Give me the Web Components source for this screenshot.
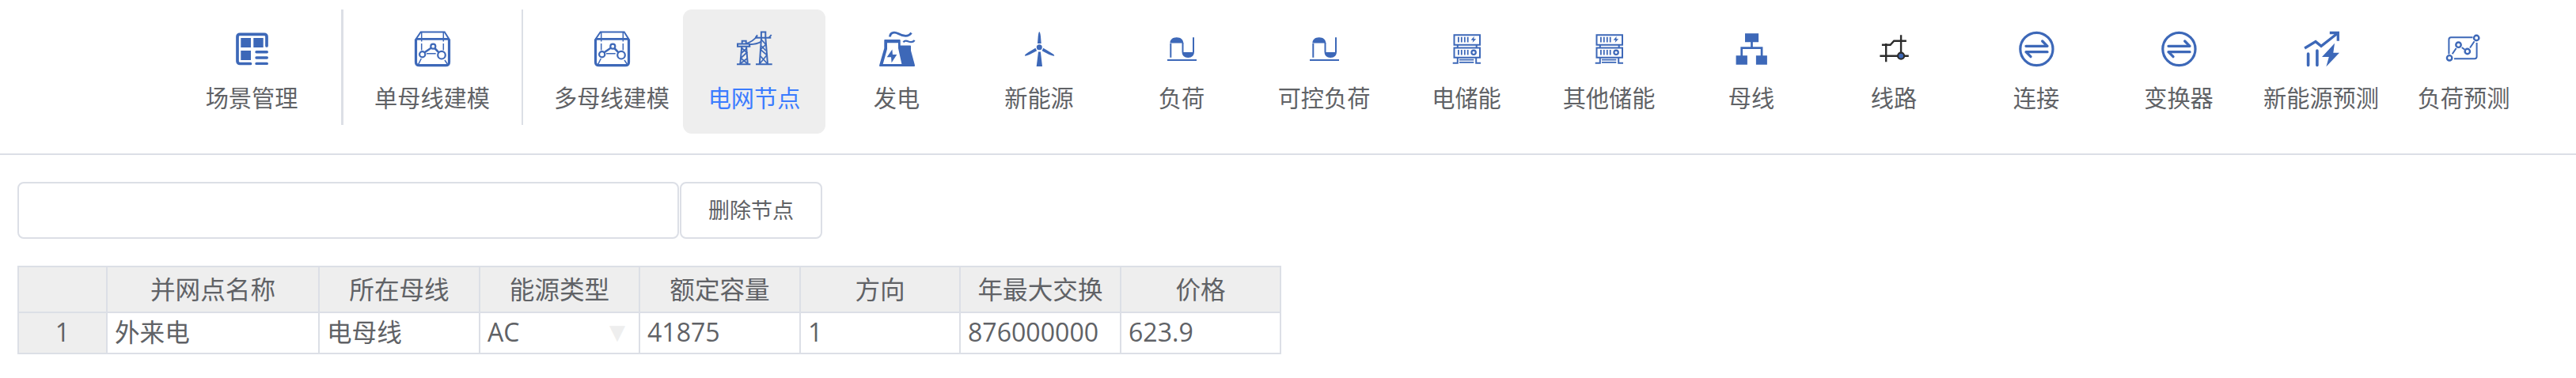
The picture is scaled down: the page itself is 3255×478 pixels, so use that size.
<!DOCTYPE html>
<html lang="zh-CN">
<head>
<meta charset="utf-8">
<title>电网节点</title>
<style>
body {
  margin: 0;
  background: #ffffff;
  color: #606266;
  font-family: "Open Sans", "Noto Sans CJK SC", sans-serif;
}
</style>
</head>
<body>
<grid-editor></grid-editor>

<script>
const box = `
  <path d="M3.5 11.5V40.5Q3.5 44.7 7.7 44.7H41.3Q45.5 44.7 45.5 40.5V11.5" stroke-width="3.2"/>
  <path d="M3 11.3H46" stroke-width="2.7"/>
  <path d="M3.2 12L9.7 2.5H39.7L45.8 12" stroke-width="2"/>
  <path d="M10.7 3V14.5M10.7 17V25.5M38.3 3V14.5M38.3 17V25.5M17 29.7H28.7M10.3 36L6.7 43.3M40 38L43.3 43" stroke-width="1.5"/>
  <path d="M14.5 28.3L23 22.5M27.3 23L32.5 28.3" stroke-width="2.6"/>
  <circle cx="11.7" cy="30.7" r="3.6" stroke-width="2.2"/>
  <circle cx="25.3" cy="20.7" r="3" stroke-width="2.2"/>
  <circle cx="36" cy="31.7" r="4.8" stroke-width="2.2"/>`;

const wave = `
  <path d="M10.3 34.7V17M25.5 16V28M39 9.3V28" stroke-width="2"/>
  <path class="fill" d="M9.4 16.4C9.4 12 12.8 9.2 17.8 9.2S26.3 12 26.3 16.4ZM24.6 28H39.9C39.9 32 37 35 32.3 35S24.6 32 24.6 28Z"/>
  <path d="M6 38H43" stroke-width="2"/>`;

const storage = `
  <path d="M8.5 6.2H41V18.7H8.5ZM8.5 22.5H41V34.7H8.5Z" stroke-width="2"/>
  <path d="M12.8 18.7V22.5M36.7 18.7V22.5M12.8 34.7V41.7H6.7M36.2 34.7V41.7H42" stroke-width="2"/>
  <path d="M15 37.6H33.3M15 40.9H33.3M13.9 8.7V15.4M17.8 8.7V15.4M21.8 8.7V15.4M25.7 8.7V15.4M13.9 25V31.5M17.8 25V31.5M21.8 25V31.5M25.7 25V31.5" stroke-width="1.8"/>
  <path class="fill" d="M33.6 8L29.6 12.8H32.4L31.6 16L36.2 11.2H33.4Z"/>
  <circle cx="33.1" cy="28.3" r="2.7" stroke-width="2.2"/>`;

const swap = `
  <circle cx="24.4" cy="24" r="20.6" stroke-width="3.2"/>
  <path d="M11 20.3H38L31.7 14M38 27.7H11L17 33.7" stroke-width="3.3" stroke-linecap="round" stroke-linejoin="round"/>`;

// every icon is drawn on a 48 x 48 grid
const icons = {
  scene: `
  <path d="M43 20V8.3a3 3 0 0 0-3-3H9a3 3 0 0 0-3 3V39.5a3 3 0 0 0 3 3H22.5" stroke-width="3.7" stroke-linecap="round"/>
  <path class="fill" d="M10.3 10H23V22H10.3ZM26.3 10H38.7V22H26.3ZM10.3 26H23V38H10.3Z"/>
  <path d="M30 27.7H43.3M30 35H43.3M30 42.4H43.3" stroke-width="3.4" stroke-linecap="round"/>`,
  box,
  pylon: `
  <path d="M32.9 9V2.5H38.3V9M33 9.7L30.8 43M38.3 9.7L41 43M8.7 17V13.8H13.7V17M8.3 20.7L6.3 43M14 20.7L15.8 43" stroke-width="2"/>
  <path d="M26 9.7H45.3M26 43.3H46.7M2 43.3H19.3M2 17.5H18.5M2 20.7H19.3M3 17V21.5M18 17V21.5" stroke-width="2"/>
  <path d="M25.5 9.7L28 6.3M42.7 9.7L45.7 6M13.7 17.2Q22.5 14.5 28 7.5M18.3 18.3Q27 18 33 14.7" stroke-width="1.9"/>
  <path d="M33 12L38.7 18.3L32 24.7L40 31.7L31 42.5M33 20L38.7 26M32 33L40.5 42.5M8 22.5L14.7 28.5L7 35.5L15.5 42.5M14.7 23L8 29M15 36L6.5 42.5" stroke-width="1.7"/>`,
  plant: `
  <path class="fill" fill-rule="evenodd" d="M9 12H27.7Q28.7 12 28.7 13V19.4H41.2Q42 19.4 42 20.4V26L47 44.5Q47.3 46 46 46H3Q1.7 46 2.1 44.5L8.3 23V13Q8.3 12 9 12ZM12 16.3V24L6.7 43H30.4L26 23V16.3Z"/>
  <path class="fill" d="M18.4 24.5L11.7 34.3H17L17.6 41.2L24.3 31H18.9Z"/>
  <path d="M15.5 8.5C16 2 22 2.5 26 4.5C32 7.8 39 9 42.5 3.5" stroke-width="2.9"/>
  <path d="M32.5 15.3C34 13 37 13.6 39 14.5C42 15.6 45 15 46.7 13" stroke-width="2.3"/>`,
  wind: `
  <circle class="fill" cx="24.3" cy="21.8" r="3.5"/>
  <path class="fill" d="M22 17L22.7 8Q23.3 2.3 24.3 2.3T26 8L26.7 17ZM19.4 22.8L21.2 26.3L12 31Q6 33.4 6 32.3Q5.7 31 10.5 28ZM29.3 22.8L27.6 26.3L36.7 31Q43 33.4 43.3 32.3Q43.3 31 38 28ZM23 27.5H25.9L28 46H20.7Z"/>`,
  wave,
  storage,
  bus: `
  <path class="fill" d="M16 4.3H33.1V15.3H16ZM4.6 32.3H18.9V43.7H4.6ZM29.9 32.3H43.9V43.7H29.9Z"/>
  <path d="M24.5 15V22.7M11.7 33V22.7H37.1V33" stroke-width="2.7"/>`,
  line: `
  <path class="dark" d="M33.1 6.3V32.7M6.4 32.8H42.8M14.2 17V40.3M8.9 18.7H19.6L24.2 13.7H39.9" stroke-width="2.4"/>
  <circle class="dot" cx="33.1" cy="32.7" r="4" stroke-width="2.2"/>`,
  swap,
  trend: `
  <path d="M3.1 23L17 14.6L24 20.3L44.5 4.3M34.8 3.5H45.3V13.7" stroke-width="3.3"/>
  <path d="M7.6 30V44.5M18.9 26V44.5" stroke-width="3.6" stroke-linecap="round"/>
  <path class="fill" d="M41 16.7L25 34H33.8L30.4 46.3L47 28.7H39.3Z"/>`,
  scatter: `
  <path d="M5.4 30.5V12Q5.4 9.3 8.1 9.3H35.5M40.6 16V33.6Q40.6 36.3 37.9 36.3H12" stroke-width="2"/>
  <path d="M9.7 30.3L14.6 23M21.7 22L25.5 24.7M32 22.5L37.6 14.3" stroke-width="2"/>
  <circle cx="6.1" cy="35.3" r="3.2" stroke-width="2.4"/>
  <circle cx="17.5" cy="18.7" r="3.2" stroke-width="2.4"/>
  <circle cx="28.8" cy="27" r="3.2" stroke-width="2.4"/>
  <circle cx="40.2" cy="10" r="3.2" stroke-width="2.4"/>`
};

class NavItem extends HTMLElement {
  constructor() {
    super();
    this.attachShadow({ mode: "open" });
  }

  connectedCallback() {
    this.shadowRoot.innerHTML = `
<style>
:host {
  display: flex;
  flex: none;
  flex-direction: column;
  align-items: center;
  box-sizing: border-box;
  width: 180px;
  height: 157px;
  padding-top: 26px;
  border-radius: 11px;
  font-size: 29.2px;
  line-height: 40px;
  white-space: nowrap;
  cursor: pointer;
}

:host([active]) {
  background: #eeeeee;
  color: #3b7cff;
}

svg {
  display: block;
  width: 48px;
  height: 48px;
  margin-bottom: 18px;
  fill: none;
  stroke: #3d68b8;
}

.fill {
  fill: #3d68b8;
  stroke: none;
}

.dark, .dot {
  stroke: #2c2c2c;
}

.dot {
  fill: #3d68b8;
}
</style>
<svg viewBox="0 0 48 48">${icons[this.getAttribute("icon")]}</svg>
<span><slot></slot></span>`;
  }
}

const navTemplate = document.createElement("template");
navTemplate.innerHTML = `
<style>
:host {
  display: flex;
  box-sizing: border-box;
  height: 196px;
  padding: 12px 0 0 228px;
  border-bottom: 2px solid #dcdfe6;
}

.divider {
  flex: none;
  width: 2px;
  height: 146px;
  margin: 0 22px 0 23px;
  background: #dcdfe6;
}

.first {
  width: 3px;
}
</style>
<nav-item icon="scene">场景管理</nav-item>
<div class="divider first"></div>
<nav-item icon="box">单母线建模</nav-item>
<div class="divider"></div>
<nav-item icon="box">多母线建模</nav-item>
<nav-item icon="pylon" active>电网节点</nav-item>
<nav-item icon="plant">发电</nav-item>
<nav-item icon="wind">新能源</nav-item>
<nav-item icon="wave">负荷</nav-item>
<nav-item icon="wave">可控负荷</nav-item>
<nav-item icon="storage">电储能</nav-item>
<nav-item icon="storage">其他储能</nav-item>
<nav-item icon="bus">母线</nav-item>
<nav-item icon="line">线路</nav-item>
<nav-item icon="swap">连接</nav-item>
<nav-item icon="swap">变换器</nav-item>
<nav-item icon="trend">新能源预测</nav-item>
<nav-item icon="scatter">负荷预测</nav-item>
`;

class NavBar extends HTMLElement {
  constructor() {
    super();
    this.attachShadow({ mode: "open" });
    this.shadowRoot.appendChild(navTemplate.content.cloneNode(true));
  }
}

const actionTemplate = document.createElement("template");
actionTemplate.innerHTML = `
<style>
:host {
  display: flex;
  gap: 1px;
  height: 72px;
}

input, button {
  box-sizing: border-box;
  height: 72px;
  border: 2px solid #dcdfe6;
  border-radius: 8px;
  background: #ffffff;
  color: inherit;
  font-family: inherit;
  font-size: 27px;
}

input {
  width: 836px;
  padding: 0 22px;
}

button {
  width: 180px;
  padding: 0 0 4px;
  cursor: pointer;
}
</style>
<input type="text">
<button><slot></slot></button>
`;

class NodeAction extends HTMLElement {
  constructor() {
    super();
    this.attachShadow({ mode: "open" });
    this.shadowRoot.appendChild(actionTemplate.content.cloneNode(true));
  }
}

const tableTemplate = document.createElement("template");
tableTemplate.innerHTML = `
<style>
:host {
  display: block;
  font-size: 31.6px;
}

table {
  table-layout: fixed;
  width: 1597px;
  border-collapse: separate;
  border-spacing: 0;
  border-top: 2px solid #dcdfe6;
  border-left: 2px solid #dcdfe6;
}

th, td {
  box-sizing: border-box;
  padding: 0 0 2px 9px;
  border-right: 2px solid #dcdfe6;
  border-bottom: 2px solid #dcdfe6;
  font-weight: 400;
  text-align: left;
  white-space: nowrap;
  line-height: 44px;
}

th {
  padding: 0;
  background: #eeeeee;
  text-align: center;
}

thead th {
  height: 58px;
}

tbody th, td {
  height: 52px;
}

tbody th {
  padding-bottom: 2px;
}

tbody th, .number {
  font-size: 32.1px;
}

.select {
  display: flex;
  align-items: center;
  justify-content: space-between;
  height: 44px;
  padding-right: 17px;
}

.arrow {
  color: #eeeeee;
  font-family: "DejaVu Sans", sans-serif;
  font-size: 26px;
}
</style>
<table>
  <colgroup>
    <col style="width: 112px">
    <col style="width: 268px">
    <col style="width: 203px">
    <col style="width: 202px">
    <col style="width: 203px">
    <col style="width: 202px">
    <col style="width: 203px">
    <col style="width: 202px">
  </colgroup>
  <thead>
    <tr>
      <th></th>
      <th>并网点名称</th>
      <th>所在母线</th>
      <th>能源类型</th>
      <th>额定容量</th>
      <th>方向</th>
      <th>年最大交换</th>
      <th>价格</th>
    </tr>
  </thead>
  <tbody>
    <tr>
      <th>1</th>
      <td>外来电</td>
      <td>电母线</td>
      <td><div class="select number">AC<span class="arrow">▼</span></div></td>
      <td class="number">41875</td>
      <td class="number">1</td>
      <td class="number">876000000</td>
      <td class="number">623.9</td>
    </tr>
  </tbody>
</table>
`;

class NodeTable extends HTMLElement {
  constructor() {
    super();
    this.attachShadow({ mode: "open" });
    this.shadowRoot.appendChild(tableTemplate.content.cloneNode(true));
  }
}

const editorTemplate = document.createElement("template");
editorTemplate.innerHTML = `
<style>
:host {
  display: block;
}

main {
  display: grid;
  gap: 34px;
  padding: 34px 22px 0;
}
</style>
<nav-bar></nav-bar>
<main>
  <node-action>删除节点</node-action>
  <node-table></node-table>
</main>
`;

class GridEditor extends HTMLElement {
  constructor() {
    super();
    this.attachShadow({ mode: "open" });
    this.shadowRoot.appendChild(editorTemplate.content.cloneNode(true));
  }
}

window.customElements.define("nav-item", NavItem);
window.customElements.define("nav-bar", NavBar);
window.customElements.define("node-action", NodeAction);
window.customElements.define("node-table", NodeTable);
window.customElements.define("grid-editor", GridEditor);
</script>
</body>
</html>
